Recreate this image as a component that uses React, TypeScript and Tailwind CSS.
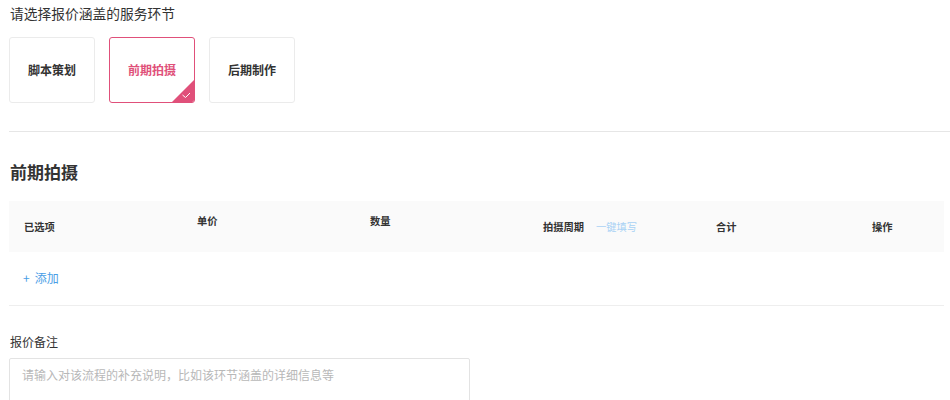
import React from "react";

const font = { fontFamily: '"Noto Sans CJK SC", "Noto Sans", sans-serif' };

function Card({ label, selected }: { label: string; selected?: boolean }) {
  return (
    <div
      className={
        "relative w-[86px] h-[66px] rounded-[3px] border flex items-center justify-center overflow-hidden " +
        (selected ? "border-[#e0507a]" : "border-[#ebebeb]")
      }
    >
      <span
        className={
          "text-[12px] font-bold " + (selected ? "text-[#e0507a]" : "text-[#333]")
        }
      >
        {label}
      </span>
      {selected && (
        <svg
          className="absolute right-0 bottom-0"
          width="22"
          height="22"
          viewBox="0 0 22 22"
        >
          <path d="M22 0 L22 22 L0 22 Z" fill="#e0507a" />
          <path
            d="M10.5 15 L13.5 17.5 L18 13"
            fill="none"
            stroke="#fff"
            strokeWidth="1"
          />
        </svg>
      )}
    </div>
  );
}

export default function App() {
  return (
    <div className="w-[950px] h-[400px] bg-white overflow-hidden" style={font}>
      <div className="pl-[10px] pt-[4px] text-[13.75px] text-[#333] leading-[18px]">
        请选择报价涵盖的服务环节
      </div>
      <div className="flex gap-[14px] pl-[9px] mt-[15px]">
        <Card label="脚本策划" />
        <Card label="前期拍摄" selected />
        <Card label="后期制作" />
      </div>
      <div className="ml-[9px] mt-[28px] h-px bg-[#e6e6e6]" />
      <div className="pl-[10px] mt-[28px] text-[17px] font-bold text-[#333] leading-[24px]">
        前期拍摄
      </div>
      <div className="ml-[9px] mr-[6px] mt-[17px] h-[51px] bg-[#fafafa] grid grid-cols-[173px_173px_173px_173px_156px_1fr] pl-[15px] text-[10.25px] font-bold text-[#333]">
        <div className="flex items-center pt-[1px]">已选项</div>
        <div className="pt-[12px]">单价</div>
        <div className="pt-[12px]">数量</div>
        <div className="flex items-center pt-[1px]">
          拍摄周期
          <span className="ml-[12px] font-normal text-[#a9d2f5]">一键填写</span>
        </div>
        <div className="flex items-center pt-[1px]">合计</div>
        <div className="flex items-center pt-[1px]">操作</div>
      </div>
      <div className="pl-[23px] mt-[18px] text-[12px] text-[#4a9ee6] leading-[16px] flex">
        <span>+</span>
        <span className="ml-[5px]">添加</span>
      </div>
      <div className="ml-[9px] mr-[6px] mt-[19px] h-px bg-[#eeeeee]" />
      <div className="pl-[10px] mt-[28px] text-[12px] text-[#333] leading-[16px]">
        报价备注
      </div>
      <div className="ml-[9px] mt-[8px] w-[461px] h-[60px] border border-[#e3e3e3] rounded-[2px] px-[12px] pt-[8px] text-[12px] text-[#b8b8b8] leading-[16px]">
        请输入对该流程的补充说明，比如该环节涵盖的详细信息等
      </div>
    </div>
  );
}
